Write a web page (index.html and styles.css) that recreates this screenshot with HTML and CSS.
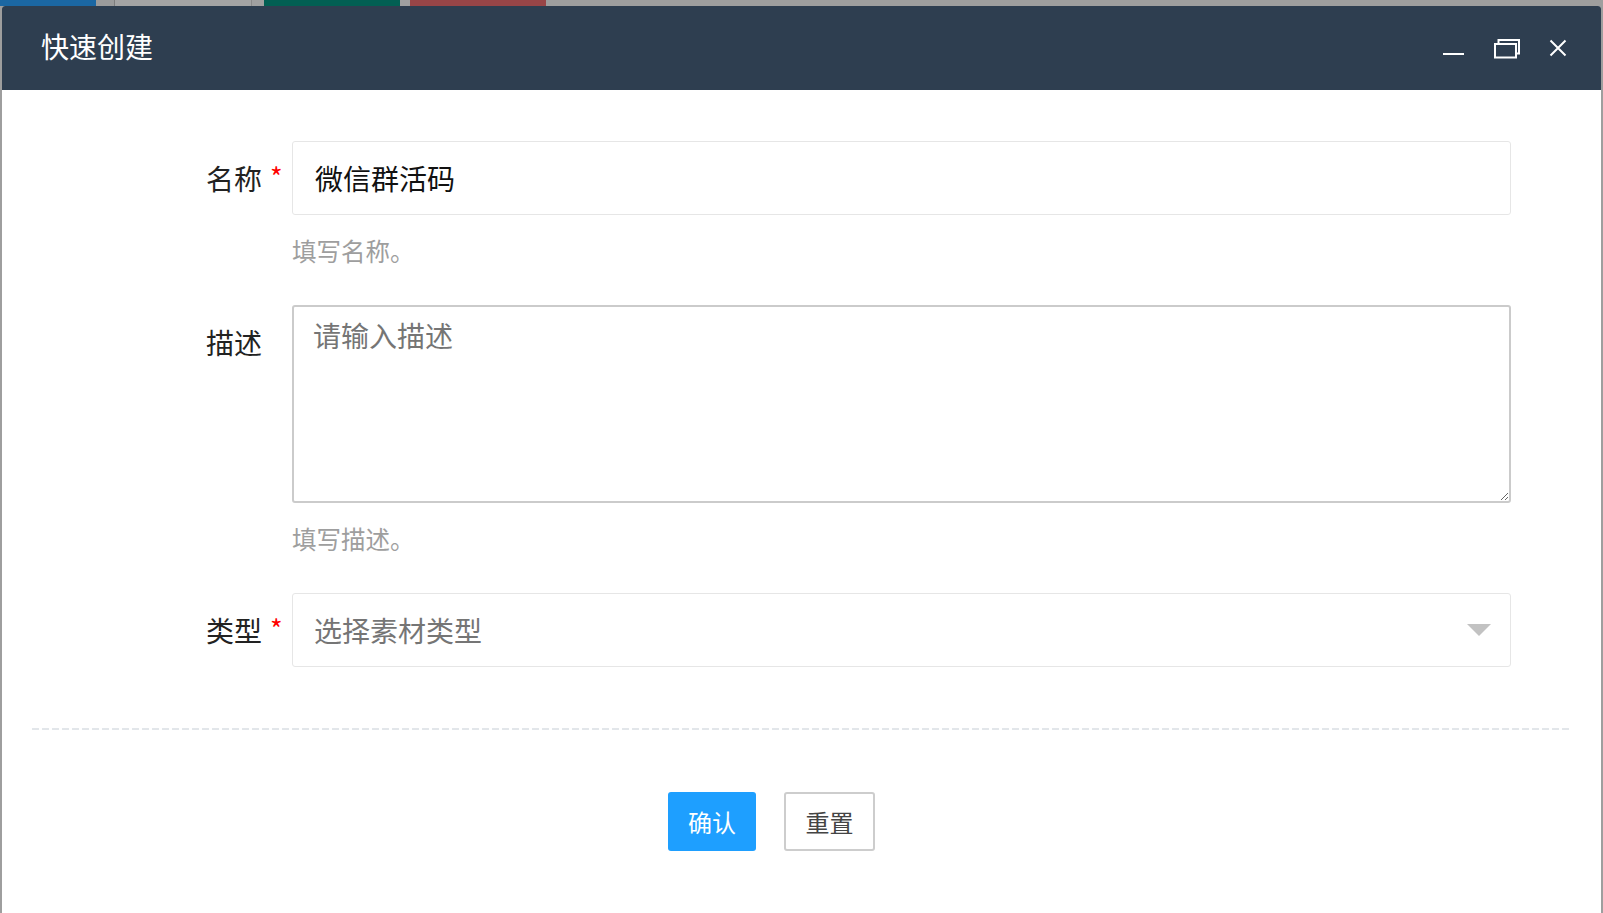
FILE: index.html
```html
<!DOCTYPE html>
<html lang="zh-CN">
<head>
    <meta charset="UTF-8">
    <title>快速创建</title>
    <link rel="stylesheet" href="styles.css">
</head>
<body>
    <div class="tab-strip">
        <span class="tab tab-blue"></span>
        <span class="tab tab-gap-a"></span>
        <span class="tab tab-plain"></span>
        <span class="tab tab-gap-b"></span>
        <span class="tab tab-green"></span>
        <span class="tab tab-gap-c"></span>
        <span class="tab tab-red"></span>
    </div>

    <div class="dialog">
        <div class="dialog-head">
            <span class="dialog-title">快速创建</span>
            <div class="head-tools">
                <svg class="tool-min" width="24" height="24" viewBox="0 0 24 24">
                    <line x1="1" y1="18" x2="22" y2="18" stroke="#fff" stroke-width="2"/>
                </svg>
                <svg class="tool-max" width="26" height="24" viewBox="0 0 26 24">
                    <rect x="1" y="8" width="21" height="13.5" fill="none" stroke="#fff" stroke-width="2"/>
                    <polyline points="4.5,7 4.5,4 25,4 25,17.5 22,17.5" fill="none" stroke="#fff" stroke-width="2"/>
                </svg>
                <svg class="tool-close" width="24" height="24" viewBox="0 0 24 24">
                    <path d="M4.5 4.5 L19.5 19.5 M19.5 4.5 L4.5 19.5" stroke="#fff" stroke-width="2"/>
                </svg>
            </div>
        </div>

        <form class="dialog-body" onsubmit="return false">
            <div class="form-item">
                <label class="form-label">名称<span class="req">*</span></label>
                <div class="form-field">
                    <input type="text" class="form-input" value="微信群活码">
                    <div class="form-help">填写名称。</div>
                </div>
            </div>

            <div class="form-item">
                <label class="form-label">描述<span class="req"></span></label>
                <div class="form-field">
                    <textarea class="form-textarea" placeholder="请输入描述"></textarea>
                    <div class="form-help">填写描述。</div>
                </div>
            </div>

            <div class="form-item">
                <label class="form-label">类型<span class="req">*</span></label>
                <div class="form-field">
                    <div class="form-select">
                        <span class="select-placeholder">选择素材类型</span>
                        <span class="select-arrow"></span>
                    </div>
                </div>
            </div>

            <div class="divider"></div>

            <div class="form-actions">
                <button type="button" class="btn btn-primary">确认</button>
                <button type="reset" class="btn btn-plain">重置</button>
            </div>
        </form>
    </div>
</body>
</html>
```

FILE: styles.css
```css
html, body {
    margin: 0;
    height: 913px;
    overflow: hidden;
}
body {
    background-color: #9e9e9e;
    font-family: "Noto Sans CJK SC", "Liberation Sans", sans-serif;
}

/* tabs of the page behind the dialog */
.tab-strip {
    display: flex;
    height: 6px;
}
.tab {
    display: block;
    height: 6px;
}
.tab-blue {
    width: 96px;
    background-color: #1b67a3;
}
.tab-gap-a {
    width: 18px;
    background-color: #9b9b9b;
    border-right: 1px solid #7d7d7d;
}
.tab-plain {
    width: 136px;
    background-color: #a4a4a4;
    border-right: 1px solid #8a8a8a;
}
.tab-gap-b {
    width: 12px;
    background-color: #a0a0a0;
}
.tab-green {
    width: 136px;
    background-color: #025f53;
}
.tab-gap-c {
    width: 10px;
    background-color: #a0a0a0;
}
.tab-red {
    width: 136px;
    background-color: #984547;
}

/* dialog */
.dialog {
    margin-left: 2px;
    width: 1599px;
    height: 907px;
    background-color: #fff;
    border-radius: 3px 3px 0 0;
    overflow: hidden;
}
.dialog-head {
    display: flex;
    align-items: center;
    height: 84px;
    padding-left: 39px;
    background-color: #2e3e50;
}
.dialog-title {
    color: #fff;
    font-size: 28px;
    line-height: 34px;
    margin-top: -4px;
}
.head-tools {
    display: flex;
    align-items: center;
    margin-left: auto;
    padding-right: 31px;
}
.head-tools svg {
    display: block;
}
.tool-max {
    margin-left: 28px;
}
.tool-close {
    margin-left: 26px;
}

/* form */
.dialog-body {
    margin: 0;
    padding-top: 51px;
}
.form-item {
    display: flex;
    margin-bottom: 39px;
}
.form-label {
    display: flex;
    align-items: center;
    justify-content: flex-end;
    width: 290px;
    height: 74px;
    font-size: 28px;
    color: #222;
}
.req {
    align-self: flex-start;
    width: 22px;
    padding: 24px 0 0 8px;
    color: #f00;
    font-size: 27px;
    line-height: 24px;
}
.form-field {
    width: 1219px;
}
.form-input {
    display: block;
    box-sizing: border-box;
    width: 100%;
    height: 74px;
    padding: 0 22px;
    border: 1px solid #e6e6e6;
    border-radius: 3px;
    font-family: inherit;
    font-size: 28px;
    color: #111;
    outline: none;
}
.form-textarea {
    display: block;
    box-sizing: border-box;
    width: 100%;
    height: 198px;
    padding: 8px 19px;
    border: 2px solid #cbcbcb;
    border-radius: 3px;
    font-family: inherit;
    font-size: 28px;
    line-height: 40px;
    color: #111;
    outline: none;
    resize: vertical;
}
.form-textarea::placeholder {
    color: #757575;
}
.form-help {
    margin-top: 21px;
    font-size: 24.5px;
    line-height: 30px;
    color: #9e9e9e;
}
.form-select {
    display: flex;
    align-items: center;
    box-sizing: border-box;
    height: 74px;
    padding-left: 21px;
    border: 1px solid #e6e6e6;
    border-radius: 3px;
}
.select-placeholder {
    font-size: 28px;
    color: #757575;
}
.select-arrow {
    margin-left: auto;
    margin-right: 19px;
    width: 0;
    height: 0;
    border-left: 12px solid transparent;
    border-right: 12px solid transparent;
    border-top: 12px solid #c2c2c2;
}

.divider {
    height: 2px;
    margin: 61px 29px 0 30px;
    background-image: repeating-linear-gradient(to right, #e2e6ea 0 7px, transparent 7px 10px);
}

.form-actions {
    display: flex;
    gap: 28px;
    margin-top: 62px;
    padding-left: 666px;
}
.btn {
    height: 59px;
    padding: 0;
    border-radius: 3px;
    font-family: inherit;
    font-size: 24px;
    cursor: pointer;
}
.btn-primary {
    width: 88px;
    border: none;
    background-color: #1e9fff;
    color: #fff;
}
.btn-plain {
    width: 91px;
    border: 2px solid #cdcdcd;
    background-color: #fff;
    color: #444;
}
```
